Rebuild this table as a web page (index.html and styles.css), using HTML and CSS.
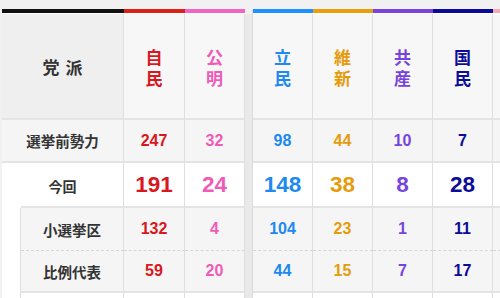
FILE: index.html
```html
<!DOCTYPE html>
<html lang="ja">
<head>
<meta charset="utf-8">
<link rel="stylesheet" href="styles.css">
</head>
<body>
<div class="wrap">
  <div class="tbl left">
    <div class="bar span2 c-black"></div>
    <div class="bar c-ldp"></div>
    <div class="bar c-kmt"></div>

    <div class="cell head party span2">党派</div>
    <div class="cell head name t-ldp">自<br>民</div>
    <div class="cell head name t-kmt">公<br>明</div>

    <div class="cell gray label span2">選挙前勢力</div>
    <div class="cell gray num t-ldp">247</div>
    <div class="cell gray num t-kmt">32</div>

    <div class="cell white label span2 now-label">今回</div>
    <div class="cell white big t-ldp">191</div>
    <div class="cell white big t-kmt">24</div>

    <div class="indent"></div>
    <div class="cell gray label dash">小選挙区</div>
    <div class="cell gray num dash t-ldp">132</div>
    <div class="cell gray num dash t-kmt">4</div>

    <div class="cell gray label">比例代表</div>
    <div class="cell gray num t-ldp">59</div>
    <div class="cell gray num t-kmt">20</div>

    <div class="cell white label"></div>
    <div class="cell white num"></div>
    <div class="cell white num"></div>
  </div>

  <div class="gap"></div>

  <div class="tbl right">
    <div class="bar c-cdp"></div>
    <div class="bar c-ishin"></div>
    <div class="bar c-jcp"></div>
    <div class="bar c-dpp"></div>
    <div class="bar c-sdp"></div>

    <div class="cell head name t-cdp">立<br>民</div>
    <div class="cell head name t-ishin">維<br>新</div>
    <div class="cell head name t-jcp">共<br>産</div>
    <div class="cell head name t-dpp">国<br>民</div>
    <div class="cell head name t-sdp"></div>

    <div class="cell gray num t-cdp">98</div>
    <div class="cell gray num t-ishin">44</div>
    <div class="cell gray num t-jcp">10</div>
    <div class="cell gray num t-dpp">7</div>
    <div class="cell gray num"></div>

    <div class="cell white big t-cdp">148</div>
    <div class="cell white big t-ishin">38</div>
    <div class="cell white big t-jcp">8</div>
    <div class="cell white big t-dpp">28</div>
    <div class="cell white big"></div>

    <div class="cell gray num dash t-cdp">104</div>
    <div class="cell gray num dash t-ishin">23</div>
    <div class="cell gray num dash t-jcp">1</div>
    <div class="cell gray num dash t-dpp">11</div>
    <div class="cell gray num dash"></div>

    <div class="cell gray num t-cdp">44</div>
    <div class="cell gray num t-ishin">15</div>
    <div class="cell gray num t-jcp">7</div>
    <div class="cell gray num t-dpp">17</div>
    <div class="cell gray num"></div>

    <div class="cell white num"></div>
    <div class="cell white num"></div>
    <div class="cell white num"></div>
    <div class="cell white num"></div>
    <div class="cell white num"></div>
  </div>
</div>
</body>
</html>
```

FILE: styles.css
```css
html, body {
  margin: 0;
  padding: 0;
  background: #f1f1f1;
  overflow: hidden;
  width: 500px;
  height: 298px;
}

.wrap {
  display: flex;
  align-items: flex-start;
  padding: 9px 0 0 2px;
  width: 600px;
}

.tbl {
  display: grid;
  grid-template-rows: 5px 106px 43px 45px 43px 42px 30px;
  font-family: "Noto Sans CJK JP", "Noto Sans", sans-serif;
  color: #333;
}

.left {
  grid-template-columns: 19px 103px 61px 60px;
  width: 243px;
}

.right {
  grid-template-columns: 60px 60px 60px 60px 60px;
  border-left: 1px solid #dcdcdc;
  width: 300px;
}

.gap {
  width: 7px;
  height: 300px;
  margin-top: 5px;
  background: #e9e9e9;
}

.span2 {
  grid-column: span 2;
}

.bar {
  border-bottom: 1px solid #fff;
}

.cell {
  box-sizing: border-box;
  border-right: 1px solid #dedede;
  border-bottom: 2px solid #e4e4e4;
  display: flex;
  align-items: center;
  justify-content: center;
  text-align: center;
}

.head {
  background: #f7f7f7;
}

.party {
  background: #efefef;
  font-size: 17px;
  font-weight: 700;
  letter-spacing: 6px;
  padding-left: 6px;
  color: #333;
}

.name {
  font-size: 17px;
  font-weight: 700;
  line-height: 21px;
  padding-top: 2px;
}

.gray {
  background: #f5f5f5;
}

.white {
  background: #fff;
}

.label {
  font-size: 14.5px;
  font-weight: 700;
  color: #333;
}

.num {
  font-family: "Liberation Sans", Arial, sans-serif;
  font-size: 16px;
  font-weight: 700;
}

.big {
  font-family: "Liberation Sans", Arial, sans-serif;
  font-size: 22.5px;
  font-weight: 700;
}

.now-label {
  font-size: 14px;
  border-bottom: none;
  background:
    linear-gradient(#e4e4e4, #e4e4e4) no-repeat right bottom / calc(100% - 19px) 2px,
    #fff;
}

.indent {
  grid-row: span 3;
  background: #fff;
  border-right: 1px solid #dedede;
}

.dash {
  border-bottom: 1px dashed #d6d6d6;
}

.c-black { background: #111; }
.c-ldp { background: #dc2016; }
.c-kmt { background: #f064c2; }
.c-cdp { background: #1e90ff; }
.c-ishin { background: #e8a00a; }
.c-jcp { background: #7a44dc; }
.c-dpp { background: #0a0a96; }
.c-sdp { background: #f4a8b6; }

.t-ldp { color: #d8181e; }
.t-kmt { color: #ee5cb8; }
.t-cdp { color: #2089f0; }
.t-ishin { color: #e59c0c; }
.t-jcp { color: #7744dd; }
.t-dpp { color: #0c0c96; }
.t-sdp { color: #ee6688; }
```
